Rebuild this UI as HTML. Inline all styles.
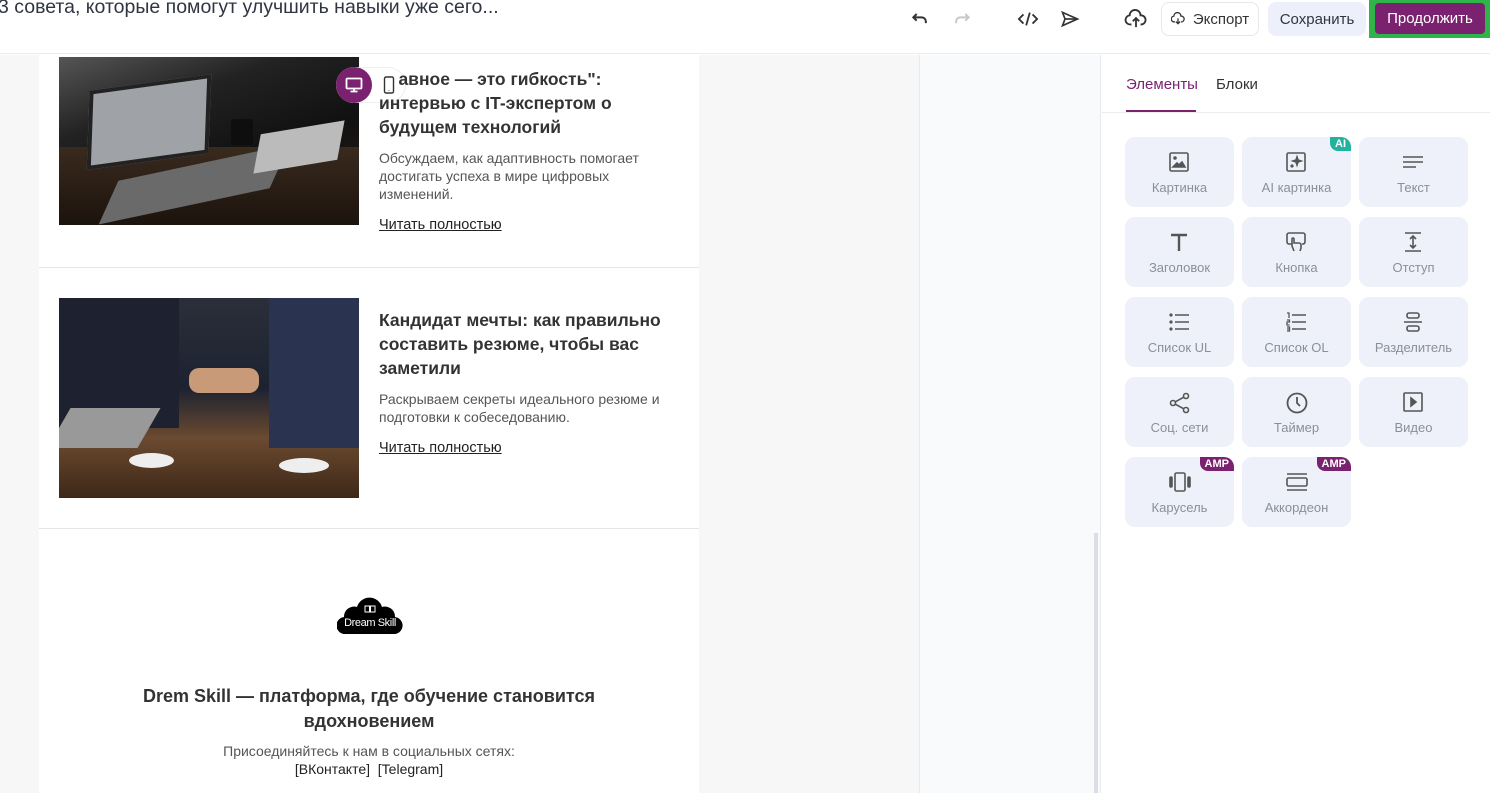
<!DOCTYPE html>
<html><head><meta charset="utf-8">
<style>
*{box-sizing:border-box;margin:0;padding:0}
body{width:1490px;height:793px;overflow:hidden;font-family:"Liberation Sans",sans-serif;background:#fff;position:relative;color:#333}
.hdr{position:absolute;left:0;top:0;width:1490px;height:54px;border-bottom:1px solid #ebebee;background:#fff}
.title{position:absolute;left:-2px;top:-4px;font-size:19.5px;color:#2f3542;white-space:nowrap}
.ic{position:absolute;top:9px}
.btn{position:absolute;top:2px;height:34px;border-radius:8px;font-size:15px;display:flex;align-items:center;justify-content:center}
.abs{position:absolute}
.canvas{position:absolute;top:55px;left:0;width:1101px;height:738px;background:#f7f7f8}
.card{position:absolute;left:39px;top:55px;width:660px;height:738px;background:#fff}
.right{position:absolute;left:919px;top:55px;width:182px;height:738px;background:#f9fafc;border-left:1px solid #e8e9ee;border-right:1px solid #e8e9ee}
.panel{position:absolute;left:1102px;top:55px;width:388px;height:738px;background:#fff}
.tile{position:absolute;width:109px;height:70px;background:#eef1f9;border-radius:10px;text-align:center;font-size:13px;color:#8a8f9c}
.tile svg{position:absolute;left:44px;top:15px}
.tile span{position:absolute;left:0;right:0;top:43px}
.badge{position:absolute;right:0;top:0;color:#fff;font-size:11px;font-weight:bold;padding:1px 5px;border-radius:0 10px 0 8px}
h3{font-size:17.5px;font-weight:bold;color:#333;line-height:24px}
.p{font-size:14px;color:#555;line-height:18px}
.lnk{font-size:14.5px;color:#222;text-decoration:underline}
</style></head><body>
<div class="hdr">
 <div class="title">3 совета, которые помогут улучшить навыки уже сего...</div>
 <svg class="ic" style="left:910px" width="20" height="20" viewBox="0 0 24 24" fill="none" stroke="#333" stroke-width="2.4"><path d="M8 6 L4 10 L8 14"/><path d="M4 10 H14 a5 5 0 0 1 5 5 v2"/></svg>
 <svg class="ic" style="left:952px" width="20" height="20" viewBox="0 0 24 24" fill="none" stroke="#c8c8cc" stroke-width="2.4"><path d="M16 6 L20 10 L16 14"/><path d="M20 10 H10 a5 5 0 0 0 -5 5 v2"/></svg>
 <svg class="ic" style="left:1017px" width="22" height="20" viewBox="0 0 24 22" fill="none" stroke="#333" stroke-width="2"><path d="M7 6 L2 11 L7 16"/><path d="M17 6 L22 11 L17 16"/><path d="M14 4 L10 18"/></svg>
 <svg class="ic" style="left:1060px" width="20" height="20" viewBox="0 0 24 24" fill="none" stroke="#333" stroke-width="2"><path d="M3 4 L21 12 L3 20 L6 12 Z"/><path d="M6 12 H21"/></svg>
 <svg class="ic" style="left:1124px" width="24" height="20" viewBox="0 0 24 22" fill="none" stroke="#333" stroke-width="2"><path d="M7 17 H6 a5 5 0 0 1 -1 -10 a6 6 0 0 1 12 0 a4.5 4.5 0 0 1 1 10 H17"/><path d="M12 20 V10 M8.5 13.5 L12 10 L15.5 13.5"/></svg>
 <div class="btn" style="left:1161px;width:98px;border:1px solid #e6e7ec;color:#333"><svg width="14" height="14" viewBox="0 0 24 24" fill="none" stroke="#333" stroke-width="2.2" style="margin-right:8px"><path d="M7 17 H6 a5 5 0 0 1 -1 -10 a6 6 0 0 1 12 0 a4.5 4.5 0 0 1 1 10 H17"/><path d="M12 11 V20 M8.5 16.5 L12 20 L15.5 16.5"/></svg>Экспорт</div>
 <div class="btn" style="left:1268px;width:98px;background:#edf0fa;color:#2f3542">Сохранить</div>
 <div class="abs" style="left:1369px;top:0;width:121px;height:38px;background:#2fb44a"></div>
 <div class="btn" style="left:1375px;width:110px;top:3px;height:31px;border-radius:4px;background:#7a2270;color:#fff">Продолжить</div>
</div>

<div class="canvas"></div>
<div class="card">
 <div class="abs" style="left:0;top:212px;width:660px;height:1px;background:#e5e5e5"></div>
 <div class="abs" style="left:0;top:473px;width:660px;height:1px;background:#e5e5e5"></div>
</div>
<div class="right"></div>
<div class="abs" style="left:1094px;top:533px;width:4px;height:260px;background:#dcdee5"></div>

<!-- image 1 -->
<div class="abs" style="left:59px;top:57px;width:300px;height:168px;background:linear-gradient(160deg,#555 0%,#222 30%,#111 60%,#2a1f18 100%);overflow:hidden">
 <div class="abs" style="left:0;top:90px;width:300px;height:78px;background:linear-gradient(#3a2a1e,#1b130d)"></div>
 <div class="abs" style="left:30px;top:25px;width:120px;height:80px;background:#9fa3a8;transform:skewX(-10deg) rotate(-8deg);border:4px solid #222"></div>
 <div class="abs" style="left:60px;top:105px;width:150px;height:45px;background:#6a6a6a;transform:skewX(-35deg) rotate(-14deg)"></div>
 <div class="abs" style="left:200px;top:70px;width:80px;height:40px;background:#bbb;transform:skewX(-20deg) rotate(-10deg)"></div>
 <div class="abs" style="left:172px;top:62px;width:22px;height:26px;background:#0e0e0e;border-radius:3px"></div>
</div>
<!-- image 2 -->
<div class="abs" style="left:59px;top:298px;width:300px;height:200px;background:linear-gradient(180deg,#2a2f3a 0%,#1c2230 45%,#6b4a30 70%,#3d2818 100%);overflow:hidden">
 <div class="abs" style="left:0;top:0;width:120px;height:130px;background:#1e2230"></div>
 <div class="abs" style="left:210px;top:0;width:90px;height:150px;background:#2a3350"></div>
 <div class="abs" style="left:130px;top:70px;width:70px;height:25px;background:#c89a78;border-radius:10px"></div>
 <div class="abs" style="left:0;top:110px;width:90px;height:40px;background:#999;transform:skewX(-30deg)"></div>
 <div class="abs" style="left:70px;top:155px;width:45px;height:15px;background:#eee;border-radius:50%"></div>
 <div class="abs" style="left:220px;top:160px;width:50px;height:15px;background:#eee;border-radius:50%"></div>
</div>

<!-- device toggle -->
<div class="abs" style="left:336px;top:67px;width:70px;height:36px;border-radius:18px;background:#fff;border:1px solid #eee"></div>
<div class="abs" style="left:336px;top:67px;width:36px;height:36px;border-radius:50%;background:#7a2270"></div>
<svg class="abs" style="left:345px;top:77px" width="18" height="16" viewBox="0 0 18 16" fill="none" stroke="#fff" stroke-width="1.8"><rect x="1.5" y="1.5" width="15" height="10" rx="1"/><path d="M9 11.5 V14.5 M5.5 14.5 H12.5"/></svg>
<svg class="abs" style="left:383px;top:76px" width="12" height="18" viewBox="0 0 12 18" fill="none" stroke="#333" stroke-width="1.4"><rect x="1.5" y="1" width="9" height="16" rx="1.5"/><path d="M6 14 v0.5"/></svg>

<div class="abs" style="left:379px;top:67px;width:300px"><h3>&nbsp;&nbsp;&nbsp;&nbsp;авное — это гибкость":<br>интервью с IT-экспертом о<br>будущем технологий</h3></div>
<div class="abs p" style="left:379px;top:149px;width:300px">Обсуждаем, как адаптивность помогает достигать успеха в мире цифровых изменений.</div>
<div class="abs lnk" style="left:379px;top:217px">Читать полностью</div>

<div class="abs" style="left:379px;top:308px;width:310px"><h3>Кандидат мечты: как правильно составить резюме, чтобы вас заметили</h3></div>
<div class="abs p" style="left:379px;top:390px;width:282px">Раскрываем секреты идеального резюме и подготовки к собеседованию.</div>
<div class="abs lnk" style="left:379px;top:440px">Читать полностью</div>

<!-- logo -->
<svg class="abs" style="left:337px;top:592px" width="66" height="44" viewBox="0 0 66 44"><path d="M9 42 a8.5 8.5 0 0 1 -2 -17 a10 10 0 0 1 13 -10 a13 13 0 0 1 25 0 a10 10 0 0 1 13 10 a8.5 8.5 0 0 1 -2 17 Z" fill="#000"/><path d="M28 14 h4.5 v6 h-4.5 z M33.5 14 h4.5 v6 h-4.5 z" fill="none" stroke="#fff" stroke-width="1"/><text x="33" y="34" font-size="11" fill="#fff" text-anchor="middle" font-family="Liberation Sans" letter-spacing="-0.4">Dream Skill</text></svg>

<div class="abs" style="left:39px;top:684px;width:660px;text-align:center;font-size:18px;font-weight:bold;color:#333;line-height:25px">Drem Skill — платформа, где обучение становится<br>вдохновением</div>
<div class="abs" style="left:39px;top:742px;width:660px;text-align:center;font-size:14px;color:#555;line-height:18px">Присоединяйтесь к нам в социальных сетях:<br><span style="color:#222">[ВКонтакте]&nbsp; [Telegram]</span></div>

<!-- panel -->
<div class="panel">
 <div class="abs" style="left:24px;top:21px;font-size:15px;color:#7a2270">Элементы</div>
 <div class="abs" style="left:114px;top:21px;font-size:15px;color:#333">Блоки</div>
 <div class="abs" style="left:24px;top:55px;width:70px;height:3px;background:#7a2270"></div>
 <div class="abs" style="left:0;top:57px;width:388px;height:1px;background:#ececf0"></div>
</div>

<div class="tile" style="left:1125px;top:137px"><svg width="20" height="20" viewBox="0 0 20 20" fill="none" stroke="#555" stroke-width="1.6"><rect x="1" y="1" width="18" height="18" rx="1.5"/><circle cx="6" cy="6" r="1" fill="#555"/><path d="M4 15 L8 11 L10 13 L13 10 L16 15 Z" fill="#555"/></svg><span>Картинка</span></div>
<div class="tile" style="left:1242px;top:137px"><div class="badge" style="background:#22b3a0">AI</div><svg width="20" height="20" viewBox="0 0 20 20" fill="none" stroke="#555" stroke-width="1.6"><rect x="1" y="1" width="18" height="18" rx="1.5"/><path d="M11 5 L12 8 L15 9 L12 10 L11 13 L10 10 L7 9 L10 8 Z" fill="#555"/><circle cx="6" cy="14" r=".8" fill="#555"/></svg><span>AI картинка</span></div>
<div class="tile" style="left:1359px;top:137px"><svg width="20" height="20" viewBox="0 0 20 20" fill="none" stroke="#555" stroke-width="1.6"><path d="M0 5 H20 M0 10 H20 M0 15 H13"/></svg><span>Текст</span></div>

<div class="tile" style="left:1125px;top:217px"><svg width="20" height="20" viewBox="0 0 20 20" fill="none" stroke="#555" stroke-width="2.4"><path d="M2 3 H18 M10 3 V19"/></svg><span>Заголовок</span></div>
<div class="tile" style="left:1242px;top:217px"><svg width="20" height="20" viewBox="0 0 20 20" fill="none" stroke="#555" stroke-width="1.6"><path d="M6 12 H3 a2 2 0 0 1 -2 -2 V3 a2 2 0 0 1 2 -2 H17 a2 2 0 0 1 2 2 V10 a2 2 0 0 1 -2 2 H16"/><path d="M8 19 L6 14 V7 a1 1 0 0 1 2 0 V11 h5 a2 2 0 0 1 2 2 V16 L14 19"/></svg><span>Кнопка</span></div>
<div class="tile" style="left:1359px;top:217px"><svg width="20" height="20" viewBox="0 0 20 20" fill="none" stroke="#555" stroke-width="1.6"><path d="M2 1 H18 M2 19 H18 M10 4 V16 M7 7 L10 4 L13 7 M7 13 L10 16 L13 13"/></svg><span>Отступ</span></div>

<div class="tile" style="left:1125px;top:297px"><svg width="20" height="20" viewBox="0 0 20 20" fill="#555"><circle cx="2" cy="3" r="1.6"/><circle cx="2" cy="10" r="1.6"/><circle cx="2" cy="17" r="1.6"/><path d="M6 2.2 H20 V3.8 H6Z M6 9.2 H20 V10.8 H6Z M6 16.2 H20 V17.8 H6Z"/></svg><span>Список UL</span></div>
<div class="tile" style="left:1242px;top:297px"><svg width="20" height="20" viewBox="0 0 20 20" fill="none" stroke="#555" stroke-width="1.3"><path d="M1 1 H3 V6 M1 8 H3.5 V10 H1 V13 H3.5 M1 15 H3.5 V19 H1 M1 17 H3.5"/><path d="M6 3 H20 M6 10 H20 M6 17 H20" stroke-width="1.6"/></svg><span>Список OL</span></div>
<div class="tile" style="left:1359px;top:297px"><svg width="20" height="20" viewBox="0 0 20 20" fill="none" stroke="#555" stroke-width="1.6"><rect x="4" y="1" width="12" height="5" rx="2"/><rect x="4" y="14" width="12" height="5" rx="2"/><path d="M1 10 H19"/></svg><span>Разделитель</span></div>

<div class="tile" style="left:1125px;top:377px"><svg width="22" height="22" viewBox="0 0 22 22" fill="none" stroke="#555" stroke-width="1.6"><circle cx="17" cy="4" r="2.5"/><circle cx="4" cy="11" r="2.5"/><circle cx="17" cy="18" r="2.5"/><path d="M6.3 9.8 L14.8 5.2 M6.3 12.2 L14.8 16.8"/></svg><span>Соц. сети</span></div>
<div class="tile" style="left:1242px;top:377px"><svg width="22" height="22" viewBox="0 0 22 22" fill="none" stroke="#555" stroke-width="1.8"><circle cx="11" cy="11" r="9.5"/><path d="M11 5 V11 L14 14"/></svg><span>Таймер</span></div>
<div class="tile" style="left:1359px;top:377px"><svg width="20" height="20" viewBox="0 0 20 20" fill="none" stroke="#555" stroke-width="1.6"><rect x="1" y="1" width="18" height="18" rx="1"/><path d="M8 6 L13 10 L8 14 Z" fill="#555"/></svg><span>Видео</span></div>

<div class="tile" style="left:1125px;top:457px"><div class="badge" style="background:#7a2270">AMP</div><svg width="22" height="20" viewBox="0 0 22 20" fill="none" stroke="#555" stroke-width="1.6"><rect x="6" y="1" width="10" height="18" rx="1.5"/><rect x="1" y="5" width="2" height="10" rx="1" fill="#555"/><rect x="19" y="5" width="2" height="10" rx="1" fill="#555"/></svg><span>Карусель</span></div>
<div class="tile" style="left:1242px;top:457px"><div class="badge" style="background:#7a2270">AMP</div><svg width="22" height="20" viewBox="0 0 22 20" fill="none" stroke="#555" stroke-width="1.6"><path d="M1 2 H21"/><rect x="1" y="6" width="20" height="8" rx="1.5"/><path d="M1 18 H21"/></svg><span>Аккордеон</span></div>
</body></html>
